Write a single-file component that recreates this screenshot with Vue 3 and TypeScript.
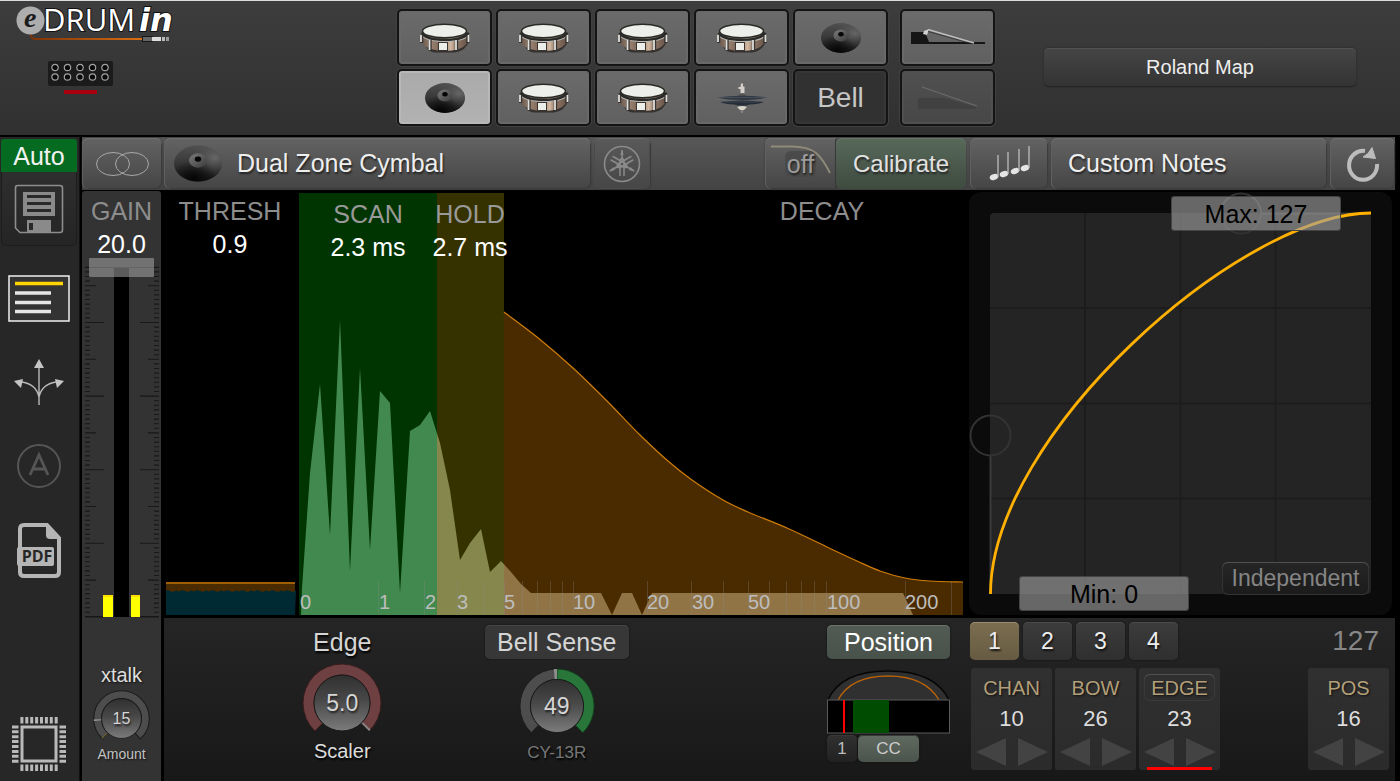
<script setup lang="ts">
import { ref } from 'vue'

type Point = [number, number]
type PadKind = 'drum' | 'cymbal' | 'hihat' | 'pedal' | 'pedal-off' | 'text'

interface Pad {
  kind: PadKind
  name: string
  active?: boolean
}

const padRows: Pad[] = [
  { kind: 'drum', name: 'Pad 1' },
  { kind: 'drum', name: 'Pad 2' },
  { kind: 'drum', name: 'Pad 3' },
  { kind: 'drum', name: 'Pad 4' },
  { kind: 'cymbal', name: 'Pad 5' },
  { kind: 'pedal', name: 'Pedal 1' },
  { kind: 'cymbal', name: 'Pad 6', active: true },
  { kind: 'drum', name: 'Pad 7' },
  { kind: 'drum', name: 'Pad 8' },
  { kind: 'hihat', name: 'Pad 9' },
  { kind: 'text', name: 'Bell' },
  { kind: 'pedal-off', name: 'Pedal 2' },
]

const padSize: Record<string, [number, number]> = {
  drum: [50, 32],
  cymbal: [40, 30],
  hihat: [50, 32],
  pedal: [74, 20],
  'pedal-off': [60, 24],
}

const gain = ref(20)

/* Chart */
const chart = { left: 166, top: 193, width: 797, height: 422 }
const leftOf = (x: number) => `${((x - chart.left) / chart.width) * 100}%`

const wave: Point[] = [
  [301, 615], [302, 588], [310, 473], [320, 384], [330, 535], [340, 320], [350, 571],
  [360, 368], [370, 550], [380, 391], [390, 403], [400, 593], [410, 431], [420, 425],
  [430, 411], [440, 443], [450, 490], [460, 560], [470, 543], [481, 529], [490, 572],
  [501, 561], [511, 572], [521, 584], [531, 593], [601, 593], [612, 615], [622, 593],
  [632, 593], [642, 615], [652, 593], [903, 593], [913, 615],
]
const wavePoints = wave.map((p) => p.join(',')).join(' ')

const decay: Point[] = [
  [504, 312], [537, 337], [573, 368], [607, 401], [640, 435], [668, 461], [692, 480],
  [723, 500], [748, 512], [787, 528], [827, 547], [857, 561], [880, 571], [905, 578],
  [930, 581], [963, 582],
]

function smooth(points: Point[]): string {
  let d = `M${points[0].join(' ')}`
  for (let i = 0; i < points.length - 1; i++) {
    const a = points[Math.max(i - 1, 0)]
    const b = points[i]
    const c = points[i + 1]
    const e = points[Math.min(i + 2, points.length - 1)]
    d += ` C${b[0] + (c[0] - a[0]) / 6} ${b[1] + (c[1] - a[1]) / 6}`
    d += ` ${c[0] - (e[0] - b[0]) / 6} ${c[1] - (e[1] - b[1]) / 6} ${c[0]} ${c[1]}`
  }
  return d
}
const decayLine = smooth(decay)
const decayArea = `${decayLine} V615 H504 Z`

const gridTicks = [
  378, 424, 457, 483, 504, 522, 537, 550, 562, 573, 647, 691, 723, 748, 769, 786, 801, 814,
  826, 905, 951,
]
const axis = [
  { text: '0', x: 300 }, { text: '1', x: 379 }, { text: '2', x: 425 }, { text: '3', x: 457 },
  { text: '5', x: 504 }, { text: '10', x: 573 }, { text: '20', x: 647 }, { text: '30', x: 692 },
  { text: '50', x: 748 }, { text: '100', x: 827 }, { text: '200', x: 905 },
]
const params = [
  { title: 'THRESH', value: '0.9', x: 230, low: false },
  { title: 'SCAN', value: '2.3 ms', x: 368, low: true },
  { title: 'HOLD', value: '2.7 ms', x: 470, low: true },
  { title: 'DECAY', value: '', x: 822, low: false },
]
const noise = Array.from({ length: 44 }, (_, i) => `${167 + i * 3},${590 + ((i * 7) % 5) / 2}`).join(' ')

/* Fader scale */
const faderTicks = Array.from({ length: 77 }, (_, i) => {
  const k = i - 12
  const size = k % 16 === 0 ? 19 : k % 8 === 0 ? 11 : 5
  return { y: 322.5 + k * 4.6, size }
})

/* Knobs: angles run clockwise from twelve o'clock */
function ring(from: number, to: number, outer = 39, inner = 28): string {
  const at = (r: number, deg: number) => {
    const t = (deg * Math.PI) / 180
    return `${r * Math.sin(t)} ${-r * Math.cos(t)}`
  }
  const large = to - from > 180 ? 1 : 0
  return `M${at(outer, from)} A${outer} ${outer} 0 ${large} 1 ${at(outer, to)} L${at(inner, to)} A${inner} ${inner} 0 ${large} 0 ${at(inner, from)} Z`
}

const layer = ref(1)
const notes = [
  { title: 'CHAN', value: 10, marked: false },
  { title: 'BOW', value: 26, marked: false },
  { title: 'EDGE', value: 23, marked: true },
  { title: 'POS', value: 16, marked: false },
]
</script>

<template>
  <div class="app">
    <svg class="defs" width="0" height="0" aria-hidden="true">
      <defs>
        <linearGradient id="shell" x1="0" x2="1" y1="0" y2="0">
          <stop offset="0" stop-color="#6b5a4e" /><stop offset=".2" stop-color="#9a8372" />
          <stop offset=".4" stop-color="#7b6555" /><stop offset=".64" stop-color="#d3b9a3" />
          <stop offset=".78" stop-color="#8d7565" /><stop offset="1" stop-color="#6b584c" />
        </linearGradient>
        <linearGradient id="plate" x1="0" x2="0" y1="0" y2="1">
          <stop offset="0" stop-color="#505050" /><stop offset=".45" stop-color="#3a3a3a" />
          <stop offset="1" stop-color="#161616" />
        </linearGradient>
        <radialGradient id="sheen" cx=".85" cy=".35" r=".5">
          <stop offset="0" stop-color="#777" stop-opacity=".7" /><stop offset="1" stop-color="#555" stop-opacity="0" />
        </radialGradient>
        <radialGradient id="shade" cx=".4" cy=".9" r=".5">
          <stop offset="0" stop-color="#000" stop-opacity=".8" /><stop offset="1" stop-color="#000" stop-opacity="0" />
        </radialGradient>
        <linearGradient id="dome" x1="0" x2="1" y1="0" y2="1">
          <stop offset="0" stop-color="#7c7c7c" /><stop offset="1" stop-color="#3a3a3a" />
        </linearGradient>
        <linearGradient id="cap" x1="0" x2="0" y1="0" y2="1">
          <stop offset="0" stop-color="#303030" /><stop offset=".45" stop-color="#484848" />
          <stop offset="1" stop-color="#7c7c7c" />
        </linearGradient>
        <linearGradient id="cable" x1="0" x2="1" y1="0" y2="0">
          <stop offset="0" stop-color="#7c3208" /><stop offset="1" stop-color="#dc6f12" />
        </linearGradient>
        <symbol id="i-drum" viewBox="0 0 50 32">
          <path d="M2 15 Q6 31 16 30.500 L35 30.500 Q46 29 49 19 L48 12 H2Z" fill="#26211e" opacity=".75" />
          <path d="M2.500 10 V22 Q9 29 25 29 T46.500 22 V10Z" fill="url(#shell)" />
          <path d="M2 10.500 Q5 18 25 18 T48 10.500" fill="none" stroke="#2a2a28" stroke-width="3" />
          <path d="M1 13 Q6 19.500 25 19.500 T49 13" fill="none" stroke="#b9bab5" stroke-width="1.200" />
          <path d="M1.500 13V21M10 18V28.500M36.500 18V28.500M48 13V21" stroke="#393432" stroke-width="3.400" />
          <path d="M1 13V20M9.500 18V28M36 18V28M48.500 13V20" stroke="#dfe0dc" stroke-width="1.800" />
          <rect x="18.500" y="20.500" width="9" height="8" fill="#eceeea" stroke="#3b3430" />
          <ellipse cx="24.500" cy="9" rx="22" ry="6.800" fill="#edf0ea" stroke="#2b2b26" stroke-width="1.500" />
        </symbol>
        <symbol id="i-cymbal" viewBox="0 0 40 30">
          <ellipse cx="20" cy="15" rx="20" ry="15" fill="url(#plate)" />
          <ellipse cx="20" cy="15" rx="20" ry="15" fill="url(#sheen)" />
          <ellipse cx="20" cy="15" rx="20" ry="15" fill="url(#shade)" />
          <ellipse cx="20" cy="12.500" rx="7.500" ry="6" fill="url(#dome)" />
          <ellipse cx="20" cy="11.300" rx="2.700" ry="2.200" fill="#050505" />
        </symbol>
        <symbol id="i-hihat" viewBox="0 0 50 32">
          <path d="M24 1.500h2v3h1.500v6.500h-4V7h-2V5h2z" fill="#d5cfcb" />
          <path d="M20 14Q25 10 30 14Z" fill="#55514f" />
          <path d="M0 15.500Q25 12 50 15.500Q40 18 25 18T0 15.500Z" fill="#303843" />
          <path d="M3 20Q25 17 47 20Q42 22 33 22.500Q25 25 17 22.500Q8 22 3 20Z" fill="#252d38" />
          <path d="M1 15.500H49M8 20H42" stroke="#59626e" stroke-width=".5" />
          <path d="M20 25Q25 23 30 25L27 28H23Z" fill="#d8d3c8" />
          <path d="M23.500 28h3l-.5 3h-2z" fill="#87827d" />
        </symbol>
        <symbol id="i-pedal" viewBox="0 0 74 20">
          <path d="M0 4H14L18 14L74 14V16H0Z" fill="#151515" />
          <path d="M13 3L18 1L16 7L12 6Z" fill="#cfcfcf" />
          <path d="M17 1.500L63 15" stroke="#bdbdbd" stroke-width="1.600" />
          <path d="M17 3.500L58 15" stroke="#303030" stroke-width=".8" />
        </symbol>
        <symbol id="i-pedal-off" viewBox="0 0 60 24">
          <path d="M0 12H26L58 21V23H0Z" fill="#414141" />
          <path d="M4 1L59 20" stroke="#6b6b6b" stroke-width="1.200" />
        </symbol>
      </defs>
    </svg>

    <header class="top">
      <div class="brand">
        <svg class="logo" viewBox="0 -5 180 45" role="img" aria-label="eDRUMin">
          <path d="M15 26V29Q15 33 20 33H127" fill="none" stroke="url(#cable)" stroke-width="2" />
          <rect x="126" y="30" width="11" height="6" fill="#161616" /><rect x="127" y="31" width="9" height="4" fill="#666" />
          <rect x="136" y="31" width="9" height="4" fill="#ddd" /><rect x="146" y="31" width="3" height="4" fill="#bbb" />
          <rect x="150" y="31" width="3" height="4" fill="#999" />
          <circle cx="14.500" cy="14.500" r="14" fill="#adadad" />
          <text class="logo-e" x="8" y="21">e</text>
          <text class="logo-drum" x="27" y="25">DRUM</text>
          <text class="logo-in" x="123" y="25">in</text>
        </svg>
        <button class="module" aria-label="Module 1">
          <svg viewBox="0 0 65 25" width="65" height="25">
            <g v-for="r in 2" :key="r">
              <circle v-for="c in 5" :key="c" :cx="c * 12.5 - 5.5" :cy="r * 9.5 - 3" r="3.200" fill="#0a0a0a" stroke="#a2a2a2" stroke-width="1.200" />
            </g>
          </svg>
        </button>
        <span class="module-mark"></span>
      </div>
      <div class="pads">
        <button v-for="pad in padRows" :key="pad.name" class="pad" :class="[pad.kind, { active: pad.active }]" :aria-label="pad.name">
          <span v-if="pad.kind === 'text'">{{ pad.name }}</span>
          <svg v-else :width="padSize[pad.kind][0]" :height="padSize[pad.kind][1]"><use :href="'#i-' + pad.kind" /></svg>
        </button>
      </div>
      <div class="map-slot"><button class="map">Roland Map</button></div>
    </header>

    <div class="body">
      <nav class="side">
        <button class="auto">Auto</button>
        <button class="save" aria-label="Save">
          <svg width="50" height="50" viewBox="0 0 50 50">
            <path d="M3.500 1.500H46Q48.500 1.500 48.500 4V46Q48.500 48.500 46 48.500H6L1.500 44V4Q1.500 1.500 3.500 1.500Z" fill="none" stroke="#8d8d8d" stroke-width="1.600" />
            <path d="M9 8H41V32H9Z" fill="#8a8a8a" />
            <path d="M13 12.500H37M13 19.500H37M13 26.500H37" stroke="#292929" stroke-width="3" />
            <path d="M13 36H37V48H13Z" fill="#8a8a8a" /><path d="M15 39H19V46H15Z" fill="#292929" />
          </svg>
        </button>
        <button class="side-item" aria-label="Settings">
          <svg width="62" height="47" viewBox="0 0 62 47">
            <rect x="1" y="1" width="60" height="45" fill="#333" stroke="#f0f0f0" stroke-width="1.500" />
            <path d="M7 8.500H55" stroke="#ffd400" stroke-width="3.400" />
            <path d="M7 18H43M7 27.500H43M7 36.500H43" stroke="#e6e6e6" stroke-width="3.400" />
          </svg>
        </button>
        <button class="side-item" aria-label="Routing">
          <svg width="50" height="48" viewBox="0 0 50 48">
            <path d="M25 8V46M25 38Q22 25 8 23M25 38Q28 25 42 23" fill="none" stroke="#b9b9b9" stroke-width="1.400" />
            <path d="M25 0L20 9H30ZM0 22L9 20L7 29ZM50 22L41 20L43 29Z" fill="#c4c4c4" />
          </svg>
        </button>
        <button class="side-item" aria-label="Automatic">
          <svg width="46" height="46" viewBox="0 0 46 46" fill="none" stroke="#555">
            <circle cx="23" cy="22" r="21" stroke-width="2" />
            <path d="M14 31L23 11L32 31M17 25H29" stroke-width="2.800" />
          </svg>
        </button>
        <button class="side-item" aria-label="PDF manual">
          <svg width="46" height="56" viewBox="0 0 46 56">
            <path d="M8 2H31L43 15V49Q43 53 39 53H8Q4 53 4 49V6Q4 2 8 2Z" fill="none" stroke="#b5b5b5" stroke-width="4" />
            <path d="M30 2L44 16H34Q30 16 30 12Z" fill="#b5b5b5" />
            <rect x="1" y="24" width="37" height="19" rx="2" fill="#b5b5b5" />
            <text class="pdf" x="21" y="39" text-anchor="middle">PDF</text>
          </svg>
        </button>
        <button class="side-item chip" aria-label="Firmware">
          <svg width="56" height="56" viewBox="0 0 56 56">
            <rect x="11" y="11" width="34" height="34" fill="none" stroke="#b9b9b9" stroke-width="3" />
            <g stroke="#b9b9b9" stroke-width="3">
              <path v-for="n in 8" :key="n" :d="`M${n * 4.9 + 6} 1v6.500m0 41v6.500M1 ${n * 4.9 + 6}h6.500m41 0h6.500`" />
            </g>
          </svg>
        </button>
      </nav>

      <main class="main">
        <div class="toolbar">
          <div class="bar-left">
            <button class="tool zones" aria-label="Zones">
              <svg width="54" height="26" viewBox="0 0 54 26" fill="none" stroke="#a9a9a9">
                <ellipse cx="18" cy="13" rx="16.500" ry="11.500" /><ellipse cx="37" cy="13" rx="16.500" ry="11.500" />
              </svg>
            </button>
            <button class="tool kind">
              <svg width="48" height="37"><use href="#i-cymbal" /></svg>
              <span>Dual Zone Cymbal</span>
            </button>
            <button class="tool brandmark" aria-label="Brand presets">
              <svg width="38" height="38" viewBox="-19 -19 38 38" fill="none" stroke="#8a8a8a">
                <circle r="17.500" stroke-width="1.600" />
                <g v-for="a in [0, 120, 240]" :key="a" :transform="`rotate(${a})`" stroke-width="1.500">
                  <path d="M0 -14V-2M-2 12V-2Q-2 -5 0 -6Q2 -5 2 -2V12" />
                  <path d="M0 -15L1.600 -9H-1.600Z" fill="#8a8a8a" stroke="none" />
                </g>
              </svg>
            </button>
            <button class="tool filter">
              <svg width="62" height="32" viewBox="0 0 62 32"><path d="M1 1.500H22Q38 1.500 46 8Q53 14 60 28" fill="none" stroke="#8f8b78" stroke-width="1.800" /></svg>
              <span>off</span>
            </button>
            <button class="tool calibrate">Calibrate</button>
          </div>
          <div class="bar-right">
            <button class="tool notes-icon" aria-label="Notes">
              <svg width="46" height="36" viewBox="0 0 46 36">
                <g v-for="n in [[8, 31], [18, 28], [29, 25], [39, 22]]" :key="n[0]">
                  <ellipse :cx="n[0]" :cy="n[1]" rx="4.400" ry="2.900" :transform="`rotate(-20 ${n[0]} ${n[1]})`" fill="#e4e4e4" />
                  <path :d="`M${n[0] + 4} ${n[1]}v-22`" stroke="#bdbdbd" stroke-width="1.300" />
                </g>
              </svg>
            </button>
            <button class="tool custom">Custom Notes</button>
            <button class="tool reset" aria-label="Reset">
              <svg width="36" height="38" viewBox="0 0 36 38">
                <path d="M32 19A14 14.500 0 1 1 20 6" fill="none" stroke="#bcbcbc" stroke-width="4" />
                <path d="M27 2.500L30.500 13.500L18 12L23 8.500Z" fill="#bcbcbc" stroke="#bcbcbc" />
              </svg>
            </button>
          </div>
        </div>

        <div class="content">
          <section class="gain">
            <label class="title" for="gain">GAIN</label>
            <output class="value" for="gain">{{ gain.toFixed(1) }}</output>
            <div class="fader">
              <svg viewBox="82 258 79 360" preserveAspectRatio="none">
                <path d="M85 267.500H159M85 616.500H159" stroke="#151515" />
                <path v-for="t in faderTicks" :key="t.y" :d="`M85 ${t.y}h${t.size}M159 ${t.y}h${-t.size}`" stroke="#181818" stroke-width="1.100" />
                <rect x="114" y="268" width="15" height="349" fill="#000" />
                <path d="M103 595H113V617H103ZM131 595H140V617H131Z" fill="#ff0" />
                <path d="M103 596H113M131 596H140" stroke="#ffe000" stroke-width="2" />
              </svg>
              <input id="gain" v-model.number="gain" type="range" min="0" max="20" step="0.1" />
            </div>
            <div class="xtalk">
              <label for="xtalk">xtalk</label>
              <div class="knob small">
                <svg viewBox="-40 -40 80 80">
                  <path :d="ring(-137, 137)" fill="#4d4d4d" stroke="#1c1c1c" stroke-width="1.500" />
                  <path :d="ring(-137, -134)" fill="#66622e" /><path :d="ring(-95, -92)" fill="#999" />
                  <circle r="28" fill="url(#cap)" stroke="#111" />
                </svg>
                <input id="xtalk" type="text" value="15" />
              </div>
              <span class="small-caption">Amount</span>
            </div>
          </section>

          <div class="stage">
            <div class="graphs">
              <section class="chart">
                <svg viewBox="166 193 797 422" preserveAspectRatio="none">
                  <defs>
                    <clipPath id="c-scan"><rect x="299" y="193" width="138" height="422" /></clipPath>
                    <clipPath id="c-hold"><rect x="437" y="193" width="67" height="422" /></clipPath>
                    <clipPath id="c-decay"><rect x="504" y="193" width="459" height="422" /></clipPath>
                  </defs>
                  <rect x="166" y="583" width="129" height="10" fill="#4a2b00" />
                  <path d="M166 583H295" stroke="#a05f05" stroke-width="2" />
                  <polygon :points="`166,615 166,591 ${noise} 295,615`" fill="#002a33" />
                  <rect x="299" y="193" width="138" height="422" fill="#003400" />
                  <rect x="437" y="193" width="67" height="422" fill="#353200" />
                  <path :d="decayArea" fill="#4a2b00" />
                  <path :d="decayLine" fill="none" stroke="#cf7d08" stroke-width="1.200" />
                  <polygon :points="wavePoints" fill="#42894f" clip-path="url(#c-scan)" />
                  <polygon :points="wavePoints" fill="#86874c" clip-path="url(#c-hold)" />
                  <polygon :points="wavePoints" fill="#917446" clip-path="url(#c-decay)" />
                  <path v-for="x in gridTicks" :key="x" :d="`M${x}.5 581V615`" stroke="#888" stroke-opacity=".3" />
                </svg>
                <div class="overlay">
                  <div v-for="p in params" :key="p.title" class="param" :class="{ low: p.low }" :style="{ left: leftOf(p.x) }">
                    <span class="title">{{ p.title }}</span>
                    <span class="value">{{ p.value }}</span>
                  </div>
                  <span v-for="a in axis" :key="a.text" class="axis" :style="{ left: leftOf(a.x) }">{{ a.text }}</span>
                </div>
              </section>

              <section class="curve">
                <svg viewBox="969 192 423 423" preserveAspectRatio="none" fill="none">
                  <rect x="990" y="213" width="381" height="381" rx="4" fill="#242424" />
                  <path d="M1085 213V594M1180.500 213V594M1275.500 213V594M990 308H1371M990 403.500H1371M990 498.500H1371" stroke="#1c1c1c" stroke-width="2" />
                  <path d="M990.500 456V594M1262 213.500H1371" stroke="#3a3a3a" stroke-width="2" />
                  <circle cx="990.500" cy="435.500" r="20" stroke="#333" stroke-width="2" />
                  <circle cx="1241" cy="213.500" r="20" stroke="#333" stroke-width="2" />
                  <path d="M990.500 594C990.500 435 1241 213 1371 213" stroke="#ffb000" stroke-width="2.800" />
                </svg>
                <button class="limit max">Max: 127</button>
                <button class="limit min">Min: 0</button>
                <button class="independent">Independent</button>
              </section>
            </div>

            <div class="controls">
              <div class="knobs">
                <div class="group">
                  <label class="heading" for="edge">Edge</label>
                  <div class="knob edge">
                    <svg viewBox="-40 -40 80 80">
                      <path :d="ring(-136, 136)" fill="#6f4041" stroke="#391d1e" />
                      <path :d="ring(133, 136)" fill="#8a8a8a" />
                      <circle r="28" fill="url(#cap)" stroke="#1a1a1a" />
                    </svg>
                    <input id="edge" type="text" value="5.0" />
                  </div>
                  <span class="caption">Scaler</span>
                </div>
                <div class="group">
                  <button class="heading boxed">Bell Sense</button>
                  <div class="knob bell">
                    <svg viewBox="-40 -40 80 80">
                      <path :d="ring(-136, 136)" fill="#4d4d4d" stroke="#1c1c1c" />
                      <path :d="ring(0, 136)" fill="#28763a" stroke="#123d1c" />
                      <path :d="ring(-5, 0)" fill="#8d8d8d" />
                      <circle r="28" fill="url(#cap)" stroke="#1a1a1a" />
                    </svg>
                    <input type="text" value="49" aria-label="Bell Sense" />
                  </div>
                  <span class="caption dim">CY-13R</span>
                </div>
                <div class="group position">
                  <button class="heading boxed green">Position</button>
                  <svg class="pos-view" width="123" height="65" viewBox="0 0 123 65">
                    <path d="M1 31Q14 2 61 2T122 31Z" fill="#303030" />
                    <path d="M1 31Q14 2 61 2T122 31" fill="none" stroke="#050505" stroke-width="1.500" />
                    <path d="M11 31Q24 7 61 7T112 31" fill="none" stroke="#bb6208" stroke-width="1.300" />
                    <rect x=".5" y="31" width="122" height="33" fill="#000" stroke="#5a5a5a" />
                    <rect x="26" y="31" width="36" height="33" fill="#004c00" />
                    <path d="M17 31V64" stroke="#f00" stroke-width="2" />
                  </svg>
                  <div class="cc-row">
                    <button class="mini">1</button><button class="mini cc">CC</button>
                  </div>
                </div>
              </div>

              <div class="note-panel">
                <div class="layers">
                  <button v-for="n in 4" :key="n" :class="{ on: layer === n }" @click="layer = n">{{ n }}</button>
                  <output>127</output>
                </div>
                <div class="cards">
                  <div v-for="n in notes" :key="n.title" class="card" :class="{ marked: n.marked, last: n.title === 'POS' }">
                    <span class="card-title">{{ n.title }}</span>
                    <span class="card-value">{{ n.value }}</span>
                    <div class="arrows">
                      <button :aria-label="n.title + ' down'"><svg width="30" height="28"><path d="M0 14L30 0V28Z" /></svg></button>
                      <button :aria-label="n.title + ' up'"><svg width="30" height="28"><path d="M30 14L0 0V28Z" /></svg></button>
                    </div>
                  </div>
                </div>
              </div>
            </div>
          </div>
        </div>
      </main>
    </div>
  </div>
</template>

<style>
body { margin: 0; background: #000; }
</style>

<style scoped>
* { box-sizing: border-box; }
.app {
  min-height: 100vh; display: flex; flex-direction: column; background: #000;
  color: #ddd; font-family: "Liberation Sans", Arial, sans-serif;
}
.defs { position: absolute; }
svg { display: block; }
button { border: 0; padding: 0; margin: 0; background: none; color: inherit; font: inherit; cursor: pointer; }
input { font: inherit; color: inherit; }

/* Header */
.top {
  height: 135px; flex: none; display: grid; grid-template-columns: 1fr auto 1fr; padding-right: 8px;
  border-top: 1px solid #d9dedc; background: linear-gradient(#3d3d3d, #303030);
}
.brand { padding: 0 0 0 16px; }
.logo { width: 180px; height: 45px; overflow: visible; }
.logo-e { font: italic bold 28px "Liberation Serif", serif; fill: #1b1b1b; }
.logo-drum { font: 31px "Open Sans", sans-serif; fill: #fff; stroke: #111; stroke-width: 2px; paint-order: stroke; }
.logo-in { font: italic bold 32px "DejaVu Sans", sans-serif; fill: #fff; stroke: #111; stroke-width: 2px; paint-order: stroke; }
.module { display: block; margin: 15px 0 0 32px; background: #1b1b1b; border-radius: 2px; }
.module-mark { display: block; width: 33px; height: 4px; margin: 4px 0 0 48px; background: #a8000f; }
.pads { display: grid; grid-template-columns: repeat(5, 95px) 103px; grid-auto-rows: 57px; gap: 3px 4px; padding-top: 8px; }
.pad {
  display: flex; align-items: center; justify-content: center; width: 95px; justify-self: end;
  border: 2px solid #141414; border-radius: 5px; background: linear-gradient(#6b6b6b, #606060);
  box-shadow: inset 0 0 0 2px #696969, 0 0 0 1px #404040;
}
.pad.active { background: linear-gradient(#aaa, #b2b2b2); box-shadow: inset 0 0 0 2px #b8b8b8, 0 0 0 1px #404040; }
.pad.text { background: #313131; font-size: 28px; color: #c6c6c6; box-shadow: inset 0 0 0 2px #363636, 0 0 0 1px #404040; }
.pad.pedal-off { background: linear-gradient(#505050, #474747); box-shadow: inset 0 0 0 2px #505050, 0 0 0 1px #404040; }
.map-slot { padding: 47px 36px 0 49px; }
.map {
  width: 100%; height: 39px; border-radius: 5px; font-size: 20px; color: #eee;
  background: linear-gradient(#454545, #333); box-shadow: inset 0 1px #525252, inset 0 -1px #262626, 0 0 2px #222;
}

/* Sidebar */
.body { flex: 1; display: flex; padding-top: 2px; }
.side { width: 80px; flex: none; display: flex; flex-direction: column; align-items: center; padding: 2px 2px 9px 1px; background: #272727; border-right: 1px solid #111; }
.auto { width: 76px; height: 33px; background: #056b20; border-radius: 3px 3px 0 0; font-size: 25px; color: #f2f2f2; line-height: 34px; }
.save { width: 76px; height: 74px; display: flex; justify-content: center; padding-top: 12px; border: 1px solid #1d1d1d; border-top: 0; border-radius: 0 0 5px 5px; background: linear-gradient(#2e2e2e, #252525); margin-bottom: 29px; }
.side-item { margin-bottom: 37px; }
.side-item + .side-item + .side-item { margin-bottom: 33px; }
.side-item.chip { margin: auto 0 0; }
.side .side-item.chip { margin-bottom: 0; }
.pdf { font: bold 16px "Open Sans", sans-serif; fill: #272727; }

/* Toolbar */
.main { flex: 1; min-width: 0; display: flex; flex-direction: column; padding: 0 5px 0 2px; }
.toolbar { height: 53px; display: flex; gap: 4px; background: linear-gradient(#585858, #434343); flex: none; border-top: 1px solid #4a4a4a; }
.bar-left { flex: 1; display: flex; }
.bar-right { width: 425px; display: flex; gap: 3px; }
.tool {
  display: flex; align-items: center; border-radius: 6px; height: 51px; color: #eee; font-size: 25px;
  background: linear-gradient(#636363, #454545); text-shadow: 1px 2px 2px #222;
  box-shadow: inset 0 1px #707070, inset 1px 0 #606060, inset -1px -1px #3c3c3c, 0 0 2px #333;
}
.zones { width: 80px; justify-content: center; margin-right: 2px; }
.kind { flex: 1; max-width: 427px; padding-left: 10px; gap: 15px; margin-right: 3px; }
.brandmark { width: 56px; justify-content: center; background: linear-gradient(#5a5a5a, #464646); box-shadow: inset 0 1px #696969, inset 0 0 0 1px #4a4a4a, 1px 1px 1px #3a3a3a; }
.filter { width: 71px; margin-left: auto; display: grid; justify-items: center; align-items: center; color: #9b9b9b; border-radius: 6px 0 0 6px; }
.filter svg, .filter span { grid-area: 1 / 1; }
.filter svg { align-self: start; margin-top: 7px; }
.filter span { background: #4a4a4a; border-radius: 6px; padding: 0 2px; line-height: 26px; }
.calibrate { width: 130px; justify-content: center; font-size: 24px; background: linear-gradient(#58695a, #3e4b3f); box-shadow: inset 0 1px #66776a, 0 0 2px #333; color: #e2e2e2; }
.notes-icon { width: 78px; justify-content: center; }
.custom { flex: 1; padding-left: 17px; }
.reset { width: 65px; justify-content: center; }

/* Gain */
.content { flex: 1; display: flex; }
.gain { width: 79px; display: flex; flex-direction: column; align-items: center; padding-top: 4px; margin-top: 1px; background: #333; border-radius: 3px 3px 0 0; }
.title { font-size: 25px; line-height: 32px; color: #8d8d8d; white-space: nowrap; }
.value { font-size: 25px; line-height: 34px; color: #fff; white-space: nowrap; }
.fader { flex: 1; width: 100%; min-height: 200px; margin-top: -3px; display: grid; grid-template: 100% / 100%; }
.fader svg { grid-area: 1 / 1; width: 100%; height: 100%; }
.fader input {
  grid-area: 1 / 1; justify-self: center; width: 65px; height: 100%; margin: 0; appearance: none;
  background: none; writing-mode: vertical-lr; direction: rtl;
}
.fader input::-webkit-slider-thumb { appearance: none; width: 65px; height: 19px; background: rgba(165, 165, 165, .55); border-radius: 1px; }
.xtalk { height: 163px; padding-top: 45px; display: flex; flex-direction: column; align-items: center; font-size: 20px; line-height: 24px; text-shadow: 1px 1px 2px #111; }
.small-caption { font-size: 14px; line-height: 14px; color: #c2c2c2; }
.knob { display: grid; place-items: center; }
.knob svg { grid-area: 1 / 1; width: 100%; height: 100%; }
.knob input { grid-area: 1 / 1; width: 60%; border: 0; padding: 0; background: none; text-align: center; font-size: 23px; color: #d5d5d5; text-shadow: 1px 2px 2px #222; }
.knob.small { width: 57px; height: 57px; margin-top: 3px; }
.knob.small input { font-size: 16px; }

/* Chart */
.stage { flex: 1; min-width: 0; display: flex; flex-direction: column; }
.graphs { flex: 1; display: flex; gap: 6px; padding: 3px 3px 3px 5px; }
.chart { flex: 1; display: grid; grid-template: 100% / 100%; min-height: 300px; }
.chart > * { grid-area: 1 / 1; }
.chart svg { width: 100%; height: 100%; }
.overlay { position: relative; }
.param { position: absolute; top: 2px; transform: translateX(-50%); display: flex; flex-direction: column; align-items: center; }
.param.low { top: 5px; }
.param.low .title { color: #999; }
.axis { position: absolute; bottom: 2px; font-size: 20px; line-height: 22px; color: #bdbdbd; }

/* Velocity curve */
.curve { position: relative; width: 423px; margin-top: -1px; background: #0b0b0b; border-radius: 12px; }
.curve svg { position: absolute; inset: 0; width: 100%; height: 100%; }
.limit { position: absolute; width: 168px; height: 33px; border-radius: 2px; background: rgba(160, 160, 160, .62); color: #000; font-size: 25px; line-height: 34px; box-shadow: 0 0 0 1px #444; }
.max { top: 5px; right: 52px; }
.min { bottom: 5px; left: 51px; }
.independent { position: absolute; right: 23px; bottom: 20px; width: 147px; height: 33px; border-radius: 6px; font-size: 23px; color: #858585; background: linear-gradient(#262626, #1b1b1b); box-shadow: inset 0 1px #505050, inset 0 0 0 1px #333; }

/* Lower controls */
.controls { height: 163px; flex: none; display: flex; margin-left: 3px; background: linear-gradient(#252525, #181818); }
.knobs { flex: 1; display: grid; grid-template-columns: 3fr 3fr 4fr; padding: 7px 20px 0 71px; }
.group { display: flex; flex-direction: column; align-items: center; text-shadow: 1px 2px 2px #000; }
.heading { height: 34px; line-height: 34px; font-size: 25px; color: #d5d5d5; }
.boxed { width: 144px; border-radius: 5px; background: #373737; box-shadow: inset 0 1px #454545, 0 0 2px #111; }
.green { width: 123px; background: linear-gradient(#535c54, #48514a); color: #fff; box-shadow: inset 0 1px #6b746c, 0 0 2px #111; }
.edge { width: 80px; height: 80px; margin-top: 4px; }
.bell { width: 76px; height: 76px; margin: 9px 0 1px; }
.caption { font-size: 20px; line-height: 16px; }
.caption.dim { font-size: 17px; color: #777; }
.position { justify-self: end; align-items: flex-start; }
.pos-view { margin-top: 10px; }
.cc-row { display: flex; gap: 1px; margin-top: 1px; }
.mini { width: 30px; height: 27px; border-radius: 5px; font-size: 17px; color: #bbb; background: linear-gradient(#303030, #222); box-shadow: inset 0 1px #3a3a3a, 0 0 2px #111; }
.cc { width: 61px; background: linear-gradient(#606a61, #4a544c); color: #ccc; }
.note-panel { width: 425px; padding: 4px 6px 0 0; }
.layers { display: flex; gap: 4px; align-items: center; font-size: 23px; }
.layers button { width: 49px; height: 38px; border-radius: 5px; color: #eee; background: linear-gradient(#3c3c3c, #2f2f2f); box-shadow: inset 0 1px #4b4b4b, 0 0 2px #111; text-shadow: 1px 2px 2px #111; }
.layers button.on { background: linear-gradient(#7b6e50, #665b42); box-shadow: inset 0 1px #9a8c6c; }
.layers output { margin-left: auto; padding-right: 10px; font-size: 28px; color: #878787; }
.cards { display: flex; gap: 3px; margin: 8px 0 0 1px; }
.card { width: 81px; height: 102px; padding-top: 6px; display: flex; flex-direction: column; align-items: center; background: linear-gradient(#303030, #2b2b2b); border-radius: 3px; }
.card.last { margin-left: auto; }
.card-title { width: 71px; height: 27px; line-height: 28px; text-align: center; font-size: 20px; color: #b29f79; border-radius: 6px; text-shadow: 1px 1px 2px #111; }
.marked { position: relative; }
.marked .card-title { box-shadow: inset 0 1px #505050, inset 0 0 0 1px #3a3a3a; }
.marked::after { content: ""; position: absolute; left: 8px; right: 8px; bottom: 0; height: 3px; background: #f00; }
.card-value { font-size: 22px; line-height: 36px; color: #ddd; }
.arrows { display: flex; gap: 12px; margin-top: 1px; }
.arrows path { fill: #434343; }
</style>
